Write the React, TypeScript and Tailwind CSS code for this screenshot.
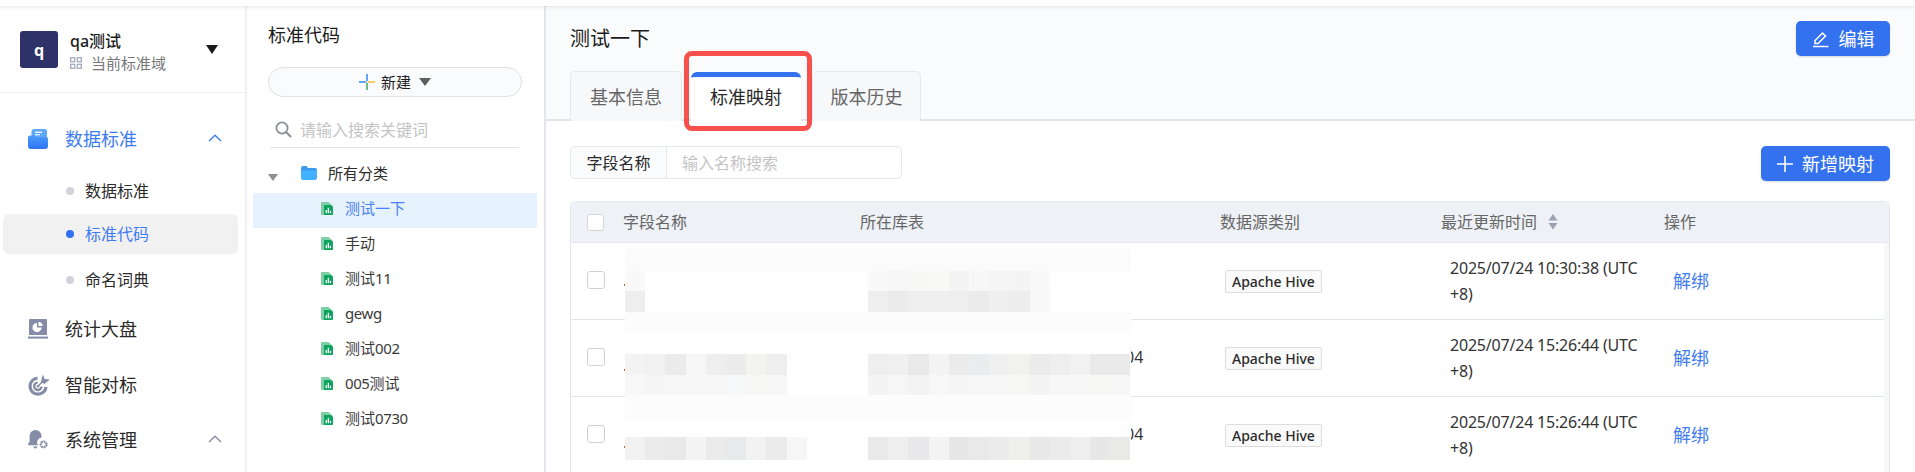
import React from "react";

const FONT = "font-['Noto_Sans','Noto_Sans_CJK_SC',sans-serif]";

function FolderNav() {
  return (
    <svg width="20" height="20" viewBox="0 0 20 20" className="shrink-0">
      <defs>
        <linearGradient id="fnav" x1="0" y1="0" x2="0" y2="1">
          <stop offset="0" stopColor="#4b9bfa" />
          <stop offset="1" stopColor="#2d74f4" />
        </linearGradient>
      </defs>
      <path d="M3.5 3A3 3 0 0 1 6.5 0h10A2.5 2.5 0 0 1 19 2.5V10H3.5z" fill="#5fa9f9" />
      <rect x="7" y="2.6" width="7" height="1.3" fill="#fff" />
      <rect x="7" y="5" width="5" height="1.3" fill="#e9f3ff" />
      <path d="M0 8.5A2 2 0 0 1 2 6.5h4.2L8 8h10a2 2 0 0 1 2 2v7a3 3 0 0 1-3 3H3a3 3 0 0 1-3-3z" fill="url(#fnav)" />
    </svg>
  );
}
function StatIcon() {
  return (
    <svg width="20" height="20" viewBox="0 0 20 20" className="shrink-0">
      <path d="M2 0h16a1 1 0 0 1 1 1v15H1V1a1 1 0 0 1 1-1z" fill="#858ca8" />
      <rect y="17.6" width="20" height="2" fill="#858ca8" />
      <path d="M9 4a4.6 4.6 0 1 0 4.6 4.6H9z" fill="#fff" />
      <path d="M10.4 3h.5a3.8 3.8 0 0 1 3.8 4H10.4z" fill="#fff" />
    </svg>
  );
}
function TargetIcon() {
  return (
    <svg width="22" height="22" viewBox="0 0 22 22" className="shrink-0">
      <g fill="none" stroke="#858ca8">
        <path d="M9.5 4.2A8 8 0 1 0 18 12.8" strokeWidth="3.2" />
        <path d="M9.6 8.6A3.7 3.7 0 1 0 13.5 12.6" strokeWidth="2.4" />
        <path d="M10 12.2 15.5 6.5" strokeWidth="1.5" />
      </g>
      <circle cx="10" cy="12.2" r="1.3" fill="#858ca8" />
      <path d="M15 0.5 16.6 5 21.8 5.6 16.5 10 12.8 8z" fill="#858ca8" />
    </svg>
  );
}
function BellIcon() {
  return (
    <svg width="20" height="22" viewBox="0 0 20 22" className="shrink-0">
      <path d="M7.5 1a6 6 0 0 1 6 6v1.6a4.8 4.8 0 0 0-3.4 7.6H1a1 1 0 0 1-.7-1.7l1.3-1.6V7a6 6 0 0 1 5.9-6z" fill="#858ca8" />
      <path d="M5.4 17.6h4a2 2 0 0 1-4 0z" fill="#858ca8" />
      <circle cx="15.6" cy="15.4" r="2.9" fill="none" stroke="#858ca8" strokeWidth="2.2" strokeDasharray="2 0.6" />
    </svg>
  );
}
function Chevron({ blue }: { blue?: boolean }) {
  return (
    <svg width="14" height="8" viewBox="0 0 14 8" className="shrink-0 -mt-[2px]">
      <path d="M1 7 7 1.2 13 7" fill="none" stroke={blue ? "#3f7cf2" : "#858ca8"} strokeWidth="1.4" />
    </svg>
  );
}
function FileIcon() {
  return (
    <svg width="12" height="13" viewBox="0 0 12 13" className="shrink-0">
      <path d="M1 0h6.5L12 4v8a1 1 0 0 1-1 1H1a1 1 0 0 1-1-1V1a1 1 0 0 1 1-1z" fill="#7fcfa6" />
      <path d="M3 3h6.5L12 5v7a1 1 0 0 1-1 1H3z" fill="#0fa45e" />
      <rect x="4.6" y="8" width="1.3" height="3.2" fill="#fff" />
      <rect x="6.7" y="5.8" width="1.3" height="5.4" fill="#fff" />
      <rect x="8.8" y="8.8" width="1.3" height="2.4" fill="#fff" />
    </svg>
  );
}

const NAV_SUB = "flex items-center text-[16px] leading-none h-10";

function Sidebar() {
  return (
    <aside className="w-[247px] shrink-0 border-r-2 border-[#eef0f3] bg-white">
      <div className="h-[87px] border-b border-[#eeeff2] pl-5 pr-[27px] pt-[25px] flex items-start">
        <div className="w-[38px] h-[37px] rounded-[3px] bg-[#2f3269] text-white font-bold text-[16px] flex items-center justify-center">q</div>
        <div className="ml-3 flex-1">
          <div className="text-[16px] leading-[20px] font-medium text-[#1c1c1c]">qa测试</div>
          <div className="flex items-center mt-[2px]">
            <svg width="12" height="12" viewBox="0 0 12 12" className="shrink-0">
              <g fill="none" stroke="#a4a9bd" strokeWidth="1.3">
                <rect x="0.7" y="0.7" width="4" height="4" />
                <rect x="7.3" y="0.7" width="4" height="4" />
                <rect x="0.7" y="7.3" width="4" height="4" />
                <rect x="7.3" y="7.3" width="4" height="4" />
              </g>
            </svg>
            <span className="ml-[9px] text-[15px] leading-[20px] text-[#777]">当前标准域</span>
          </div>
        </div>
        <svg width="12" height="9" viewBox="0 0 12 9" className="mt-[14px] shrink-0">
          <path d="M0 0h12L6 9z" fill="#1a1a1a" />
        </svg>
      </div>

      <div className="mt-[26px] h-10 pl-7 pr-[23px] flex items-center">
        <FolderNav />
        <span className="ml-[17px] flex-1 text-[18px] leading-none text-[#3f7cf2]">数据标准</span>
        <Chevron blue />
      </div>
      <div className={`${NAV_SUB} mt-3 pl-[66px] text-[#2a2a2a]`}>
        <span className="w-2 h-2 rounded-full bg-[#d0d3da]" />
        <span className="ml-[11px]">数据标准</span>
      </div>
      <div className={`${NAV_SUB} mt-[3px] ml-[3px] w-[235px] pl-[63px] rounded-md bg-[#f1f1f2] text-[#3f7cf2]`}>
        <span className="w-2 h-2 rounded-full bg-[#2f6ff0]" />
        <span className="ml-[11px]">标准代码</span>
      </div>
      <div className={`${NAV_SUB} mt-[6px] pl-[66px] text-[#2a2a2a]`}>
        <span className="w-2 h-2 rounded-full bg-[#d0d3da]" />
        <span className="ml-[11px]">命名词典</span>
      </div>
      <div className="mt-[9px] h-10 pl-7 flex items-center text-[18px] leading-none text-[#2a2a2a]">
        <StatIcon />
        <span className="ml-[17px]">统计大盘</span>
      </div>
      <div className="mt-4 h-10 pl-7 flex items-center text-[18px] leading-none text-[#2a2a2a]">
        <TargetIcon />
        <span className="ml-[15px]">智能对标</span>
      </div>
      <div className="mt-[15px] h-10 pl-7 pr-[23px] flex items-center text-[18px] leading-none text-[#2a2a2a]">
        <BellIcon />
        <span className="ml-[17px] flex-1">系统管理</span>
        <Chevron />
      </div>
    </aside>
  );
}

const L = "tracking-[-0.4px]";
const TREE: React.ReactNode[] = [
  "手动",
  <>测试<span className={L}>11</span></>,
  <span className={L}>gewg</span>,
  <>测试<span className={L}>002</span></>,
  <><span className={L}>005</span>测试</>,
  <>测试<span className={L}>0730</span></>,
];

function TreePanel() {
  return (
    <section className="w-[299px] shrink-0 border-r-2 border-[#e4e6ec] bg-white">
      <div className="pl-[21px] pr-[22px] pt-4">
        <div className="text-[18px] leading-[26px] text-[#1c1c1c]">标准代码</div>
        <div className="mt-[19px] w-[254px] h-[30px] rounded-full border border-[#dfe0e3] bg-[#fafbfd] flex items-center justify-center">
          <svg width="16" height="16" viewBox="0 0 16 16" className="shrink-0">
            <rect x="0" y="7.2" width="7.2" height="1.6" fill="#3d8df5" />
            <rect x="8.8" y="7.2" width="7.2" height="1.6" fill="#f9c03a" />
            <rect x="7.2" y="0" width="1.6" height="7.2" fill="#3d8df5" />
            <rect x="7.2" y="8.8" width="1.6" height="7.2" fill="#4fae5f" />
          </svg>
          <span className="ml-[6px] text-[15px] leading-none text-[#222]">新建</span>
          <svg width="12" height="8" viewBox="0 0 12 8" className="ml-2 shrink-0">
            <path d="M0 0h12L6 8z" fill="#5f5f5f" />
          </svg>
        </div>
        <div className="mt-[15px] ml-[2px] w-[249px] h-9 border-b border-[#e2e3e6] flex items-center pl-[5px]">
          <svg width="17" height="17" viewBox="0 0 17 17" className="shrink-0">
            <circle cx="7" cy="7" r="5.6" fill="none" stroke="#8b8f96" strokeWidth="1.8" />
            <path d="M11 11l5 5" stroke="#8b8f96" strokeWidth="2" />
          </svg>
          <span className="ml-2 text-[16px] leading-none text-[#c4c4c4]">请输入搜索关键词</span>
        </div>
      </div>
      <div className="mt-[7px] mb-[2px] h-9 pl-[21px] flex items-center text-[15px] leading-none text-[#2a2a2a]">
        <svg width="10" height="7" viewBox="0 0 10 7" className="mt-2 shrink-0">
          <path d="M0 0h10L5 7z" fill="#8f8f8f" />
        </svg>
        <svg width="16" height="14" viewBox="0 0 16 14" className="ml-[23px] shrink-0">
          <path d="M0 2a2 2 0 0 1 2-2h3.5L7 2h7a2 2 0 0 1 2 2v1H0z" fill="#3c9be8" />
          <path d="M0 4.4h16V11.5A2.5 2.5 0 0 1 13.5 14h-11A2.5 2.5 0 0 1 0 11.5z" fill="#40b0ff" />
        </svg>
        <span className="ml-[11px]">所有分类</span>
      </div>
      <div className="ml-[6px] w-[284px] h-[35px] pb-[5px] bg-[#e6f3ff] flex items-center pl-[68px] text-[15px] leading-none text-[#4a80f0]">
        <FileIcon />
        <span className="ml-3">测试一下</span>
      </div>
      {TREE.map((t, i) => (
        <div key={i} className="ml-[6px] w-[284px] h-[35px] pb-[5px] flex items-center pl-[68px] text-[15px] leading-none text-[#3a3a3a]">
          <FileIcon />
          <span className="ml-3">{t}</span>
        </div>
      ))}
    </section>
  );
}

type Row = { time: string; tail?: string; mark: string };
const ROWS: Row[] = [
  { time: "2025/07/24 10:30:38 (UTC +8)", mark: "-mt-[2px]" },
  { time: "2025/07/24 15:26:44 (UTC +8)", tail: "04", mark: "mt-[14px]" },
  { time: "2025/07/24 15:26:44 (UTC +8)", tail: "04", mark: "mt-[14px]" },
];
const GRID = "grid grid-cols-[52px_237px_360px_221px_223px_1fr] items-center";

const A = ["bg-[#f9f9f9]"];
const B = ["bg-[#eeeeee]"];
const AR = ["bg-[#f9f9f9]", "bg-[#f6f6f6]", "bg-[#f7f7f6]", "bg-[#f8f8f7]", "bg-[#f4f4f4]", "bg-[#f7f7f7]", "bg-[#f5f5f5]", "bg-[#f4f4f4]", "bg-[#f8f9f8]"];
const BR = ["bg-[#eeeeee]", "bg-[#ebebeb]", "bg-[#eeeeee]", "bg-[#efefef]", "bg-[#eeeeee]", "bg-[#ebebeb]", "bg-[#efefef]", "bg-[#ededed]", "bg-[#f7f8f7]"];
const CL = ["bg-[#f3f3f3]", "bg-[#f1f1f1]", "bg-[#ebebeb]", "bg-[#f6f6f6]", "bg-[#eeeeee]", "bg-[#ececec]", "bg-[#f3f3f0]", "bg-[#eeeeee]"];
const CR = ["bg-[#eeeeee]", "bg-[#f0f0f0]", "bg-[#e9e9e9]", "bg-[#f4f4f4]", "bg-[#ebebeb]", "bg-[#ebeced]", "bg-[#f0f0f0]", "bg-[#f1f1ee]", "bg-[#ebebeb]", "bg-[#eeeeee]", "bg-[#f1f1f1]", "bg-[#e9e9e9]", "bg-[#e9e9e9]"];
const DL = ["bg-[#f8f8f8]", "bg-[#f5f5f5]", "bg-[#f7f7f7]", "bg-[#f7f7f7]", "bg-[#f7f7f7]", "bg-[#f6f8f9]", "bg-[#f7f7f5]", "bg-[#f7f7f7]"];
const DR = ["bg-[#f4f4f4]", "bg-[#f6f6f6]", "bg-[#f3f3f3]", "bg-[#f8f8f8]", "bg-[#f5f5f5]", "bg-[#f6f6f6]", "bg-[#f6f6f6]", "bg-[#f6f6f3]", "bg-[#f4f4f4]", "bg-[#f7f7f7]", "bg-[#f7f7f7]", "bg-[#f6f6f4]", "bg-[#f6f6f6]"];
const EL = ["bg-[#f2f2f2]", "bg-[#ebebeb]", "bg-[#e8e9e8]", "bg-[#f4f4f4]", "bg-[#ebebeb]", "bg-[#e8e9ea]", "bg-[#f2f2f2]", "bg-[#ebebeb]", "bg-[#f5f6f5]"];
const ER = ["bg-[#e9e9e9]", "bg-[#efeff0]", "bg-[#e8e8ea]", "bg-[#f3f3f3]", "bg-[#e7e7e7]", "bg-[#e9e9e9]", "bg-[#ececec]", "bg-[#efefec]", "bg-[#e8e8e8]", "bg-[#ebebeb]", "bg-[#eeeeee]", "bg-[#e7e7e7]", "bg-[#e9eae8]"];

function Cells({ items }: { items: string[] }) {
  return (
    <>
      {items.map((c, i) => (
        <div key={i} className={`w-[20.2px] h-full shrink-0 ${c}`} />
      ))}
    </>
  );
}
function PatchRow({ left, right, h }: { left: string[]; right: string[]; h: string }) {
  return (
    <div className={`flex ${h}`}>
      <div className="w-[243px] h-full flex">
        <Cells items={left} />
      </div>
      <div className="flex-1 h-full flex">
        <Cells items={right} />
      </div>
    </div>
  );
}

function BlurOverlay() {
  return (
    <div className="absolute left-[54px] top-[47px] w-[506px] h-[211px] bg-[#fefefe] flex flex-col">
      <div className="h-[22px] bg-[#fafbfa]" />
      <PatchRow left={A} right={AR} h="h-5" />
      <PatchRow left={B} right={BR} h="h-[21px]" />
      <div className="h-5 bg-[#fcfcfc]" />
      <div className="h-[22px]" />
      <PatchRow left={CL} right={CR} h="h-[21px]" />
      <PatchRow left={DL} right={DR} h="h-5" />
      <div className="h-[25px] bg-[#fcfcfc]" />
      <div className="h-[17px]" />
      <PatchRow left={EL} right={ER} h="h-[23px]" />
    </div>
  );
}

function Table() {
  return (
    <div className="relative mt-5 rounded-t-md border border-b-0 border-[#e4e6ec]">
      <div className={`${GRID} h-[41px] rounded-t-md bg-[#eef1f6] border-b border-[#e4e6ec] text-[16px] leading-none text-[#666]`}>
        <div className="pl-[16px]">
          <div className="w-[17px] h-[17px] rounded-[3px] border border-[#d4d6da] bg-white" />
        </div>
        <div>字段名称</div>
        <div>所在库表</div>
        <div>数据源类别</div>
        <div className="flex items-center">
          <span>最近更新时间</span>
          <svg width="10" height="16" viewBox="0 0 10 16" className="ml-[11px]">
            <path d="M5 0l4.5 6.5h-9z" fill="#9ba1ad" />
            <path d="M5 15.5L.5 9h9z" fill="#9ba1ad" />
          </svg>
        </div>
        <div>操作</div>
      </div>
      <div className="flex">
        <div className="flex-1 min-w-0">
          {ROWS.map((r, i) => (
            <div key={i} className={`${GRID} h-[77px] border-b border-[#e4e6ec] text-[16px]`}>
              <div className="pl-[16px] -mt-[3px]">
                <div className="w-[18px] h-[18px] rounded-[3px] border border-[#cfd1d5] bg-white" />
              </div>
              <div className={`text-[#333] leading-none ${r.mark}`}>.</div>
              <div className="pl-[265px] text-[#333] leading-none -mt-[3px]">{r.tail}</div>
              <div className="pl-[5px]">
                <span className="inline-block h-[23px] px-[6px] rounded-[2px] border border-[#dcdde0] bg-[#fafafa] text-[14px] leading-[21px] font-medium text-[#2a2a2a]">Apache Hive</span>
              </div>
              <div className="pl-[9px] pr-1 text-[16px] leading-[26px] tracking-[-0.2px] text-[#333]">{r.time}</div>
              <div className="pl-[9px] text-[18px] leading-none text-[#3f7cf2]">解绑</div>
            </div>
          ))}
        </div>
        <div className="w-[5px] shrink-0 bg-[#f6f7f9]" />
      </div>
      <BlurOverlay />
    </div>
  );
}

export default function App() {
  return (
    <div className={`relative w-[1915px] h-[472px] overflow-hidden bg-white ${FONT}`}>
      <div className="relative z-10 h-[6px] bg-white shadow-[0_1px_4px_rgba(0,0,0,0.1)]" />
      <div className="flex h-[466px]">
        <Sidebar />
        <TreePanel />
        <main className="flex-1 min-w-0">
          <div className="h-[115px] bg-[#fafbfd] border-b-2 border-[#e3e4e8] px-6 pr-[25px] pt-[15px]">
            <div className="flex items-center justify-between h-[35px]">
              <div className="text-[20px] leading-none text-[#1c1c1c]">测试一下</div>
              <button className="w-[94px] h-[35px] rounded-[5px] bg-[#3471ee] shadow-[0_1px_2px_rgba(0,0,0,0.15)] text-white text-[18px] leading-none flex items-center justify-center">
                <svg width="18" height="18" viewBox="0 0 18 18" className="mr-[9px] shrink-0">
                  <path d="M1 16.5h15.5M3 13.5V10.5L10.5 3l3 3L6 13.5z" fill="none" stroke="#fff" strokeWidth="1.5" />
                </svg>
                编辑
              </button>
            </div>
            <div className="mt-[15px] flex items-start h-[50px]">
              <div className="w-[112px] h-[50px] rounded-t-[5px] border border-b-0 border-[#e6e8ec] bg-[#f7f8fa] flex items-center justify-center text-[18px] leading-none text-[#666]">基本信息</div>
              <div className="ml-[9px] mt-px w-[110px] h-[49px] pb-[5px] rounded-t-[6px] border-t-[5px] border-[#3471ee] bg-white flex items-center justify-center text-[18px] leading-none text-[#2a2a2a]">标准映射</div>
              <div className="ml-[11px] w-[109px] h-[50px] rounded-t-[5px] border border-b-0 border-[#e6e8ec] bg-[#f7f8fa] flex items-center justify-center text-[18px] leading-none text-[#666]">版本历史</div>
            </div>
          </div>
          <div className="pl-6 pr-[25px] pt-[25px]">
            <div className="flex items-start justify-between">
              <div className="w-[332px] h-[33px] rounded-[5px] border border-[#e6e8ec] flex items-stretch text-[16px] leading-none">
                <div className="w-[96px] shrink-0 rounded-l-[5px] border-r border-[#e6e8ec] bg-[#fafbfd] text-[#2a2a2a] flex items-center justify-center">字段名称</div>
                <div className="pl-[15px] text-[#c4c4c4] flex items-center">输入名称搜索</div>
              </div>
              <button className="w-[129px] h-[35px] rounded-[5px] bg-[#3471ee] shadow-[0_1px_2px_rgba(0,0,0,0.15)] text-white text-[18px] leading-none flex items-center justify-center">
                <svg width="16" height="16" viewBox="0 0 16 16" className="mr-[9px] shrink-0">
                  <path d="M8 0v16M0 8h16" stroke="#fff" strokeWidth="1.6" />
                </svg>
                新增映射
              </button>
            </div>
            <Table />
          </div>
        </main>
      </div>
      <div className="absolute left-[684px] top-[51px] w-[128px] h-[80px] rounded-[8px] border-[5px] border-[#f8504d]" />
    </div>
  );
}
